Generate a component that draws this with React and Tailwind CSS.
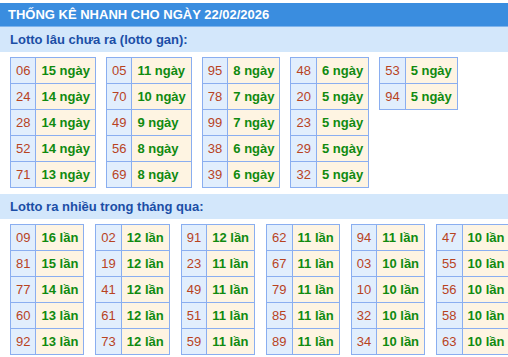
const gan = [
  [['06', 15], ['24', 14], ['28', 14], ['52', 14], ['71', 13]],
  [['05', 11], ['70', 10], ['49', 9], ['56', 8], ['69', 8]],
  [['95', 8], ['78', 7], ['99', 7], ['38', 6], ['39', 6]],
  [['48', 6], ['20', 5], ['23', 5], ['29', 5], ['32', 5]],
  [['53', 5], ['94', 5]],
];

const nhieu = [
  [['09', 16], ['81', 15], ['77', 14], ['60', 13], ['92', 13]],
  [['02', 12], ['19', 12], ['41', 12], ['61', 12], ['73', 12]],
  [['91', 12], ['23', 11], ['49', 11], ['51', 11], ['59', 11]],
  [['62', 11], ['67', 11], ['79', 11], ['85', 11], ['89', 11]],
  [['94', 11], ['03', 10], ['10', 10], ['32', 10], ['34', 10]],
  [['47', 10], ['55', 10], ['56', 10], ['58', 10], ['63', 10]],
];

function StatTable({ rows, unit }) {
  return (
    <table className="border-collapse self-start">
      <tbody>
        {rows.map(([num, count]) => (
          <tr key={num}>
            <td className="h-[26px] border border-[#8aaef0] bg-[#e1eefd] px-[5px] text-[#b8431f] leading-none">{num}</td>
            <td className="h-[26px] border border-[#8aaef0] bg-[#fef4e2] px-[5px] font-bold text-[#108a10] leading-none whitespace-nowrap">
              {count} {unit}
            </td>
          </tr>
        ))}
      </tbody>
    </table>
  );
}

function SectionTitle({ children }) {
  return (
    <div className="h-[25px] flex items-center bg-[#d3e7fb] px-[10px] font-bold text-[#1b4ea6]">
      {children}
    </div>
  );
}

export default function App() {
  return (
    <div className="w-[508px] h-[357px] overflow-hidden bg-white pt-[3px] text-[13px] font-['Liberation_Sans',Arial,sans-serif]">
      <div className="h-[24px] flex items-center bg-[#3a8ddf] border-b border-[#7fb4ec] px-[8px] font-bold text-white">
        THỐNG KÊ NHANH CHO NGÀY 22/02/2026
      </div>
      <SectionTitle>Lotto lâu chưa ra (lotto gan):</SectionTitle>
      <div className="flex gap-[10px] px-[10px] pt-[5px]">
        {gan.map((rows, i) => (
          <StatTable key={i} rows={rows} unit="ngày" />
        ))}
      </div>
      <div className="mt-[6px]">
        <SectionTitle>Lotto ra nhiều trong tháng qua:</SectionTitle>
      </div>
      <div className="flex gap-[11px] px-[10px] pt-[5px]">
        {nhieu.map((rows, i) => (
          <StatTable key={i} rows={rows} unit="lần" />
        ))}
      </div>
    </div>
  );
}
